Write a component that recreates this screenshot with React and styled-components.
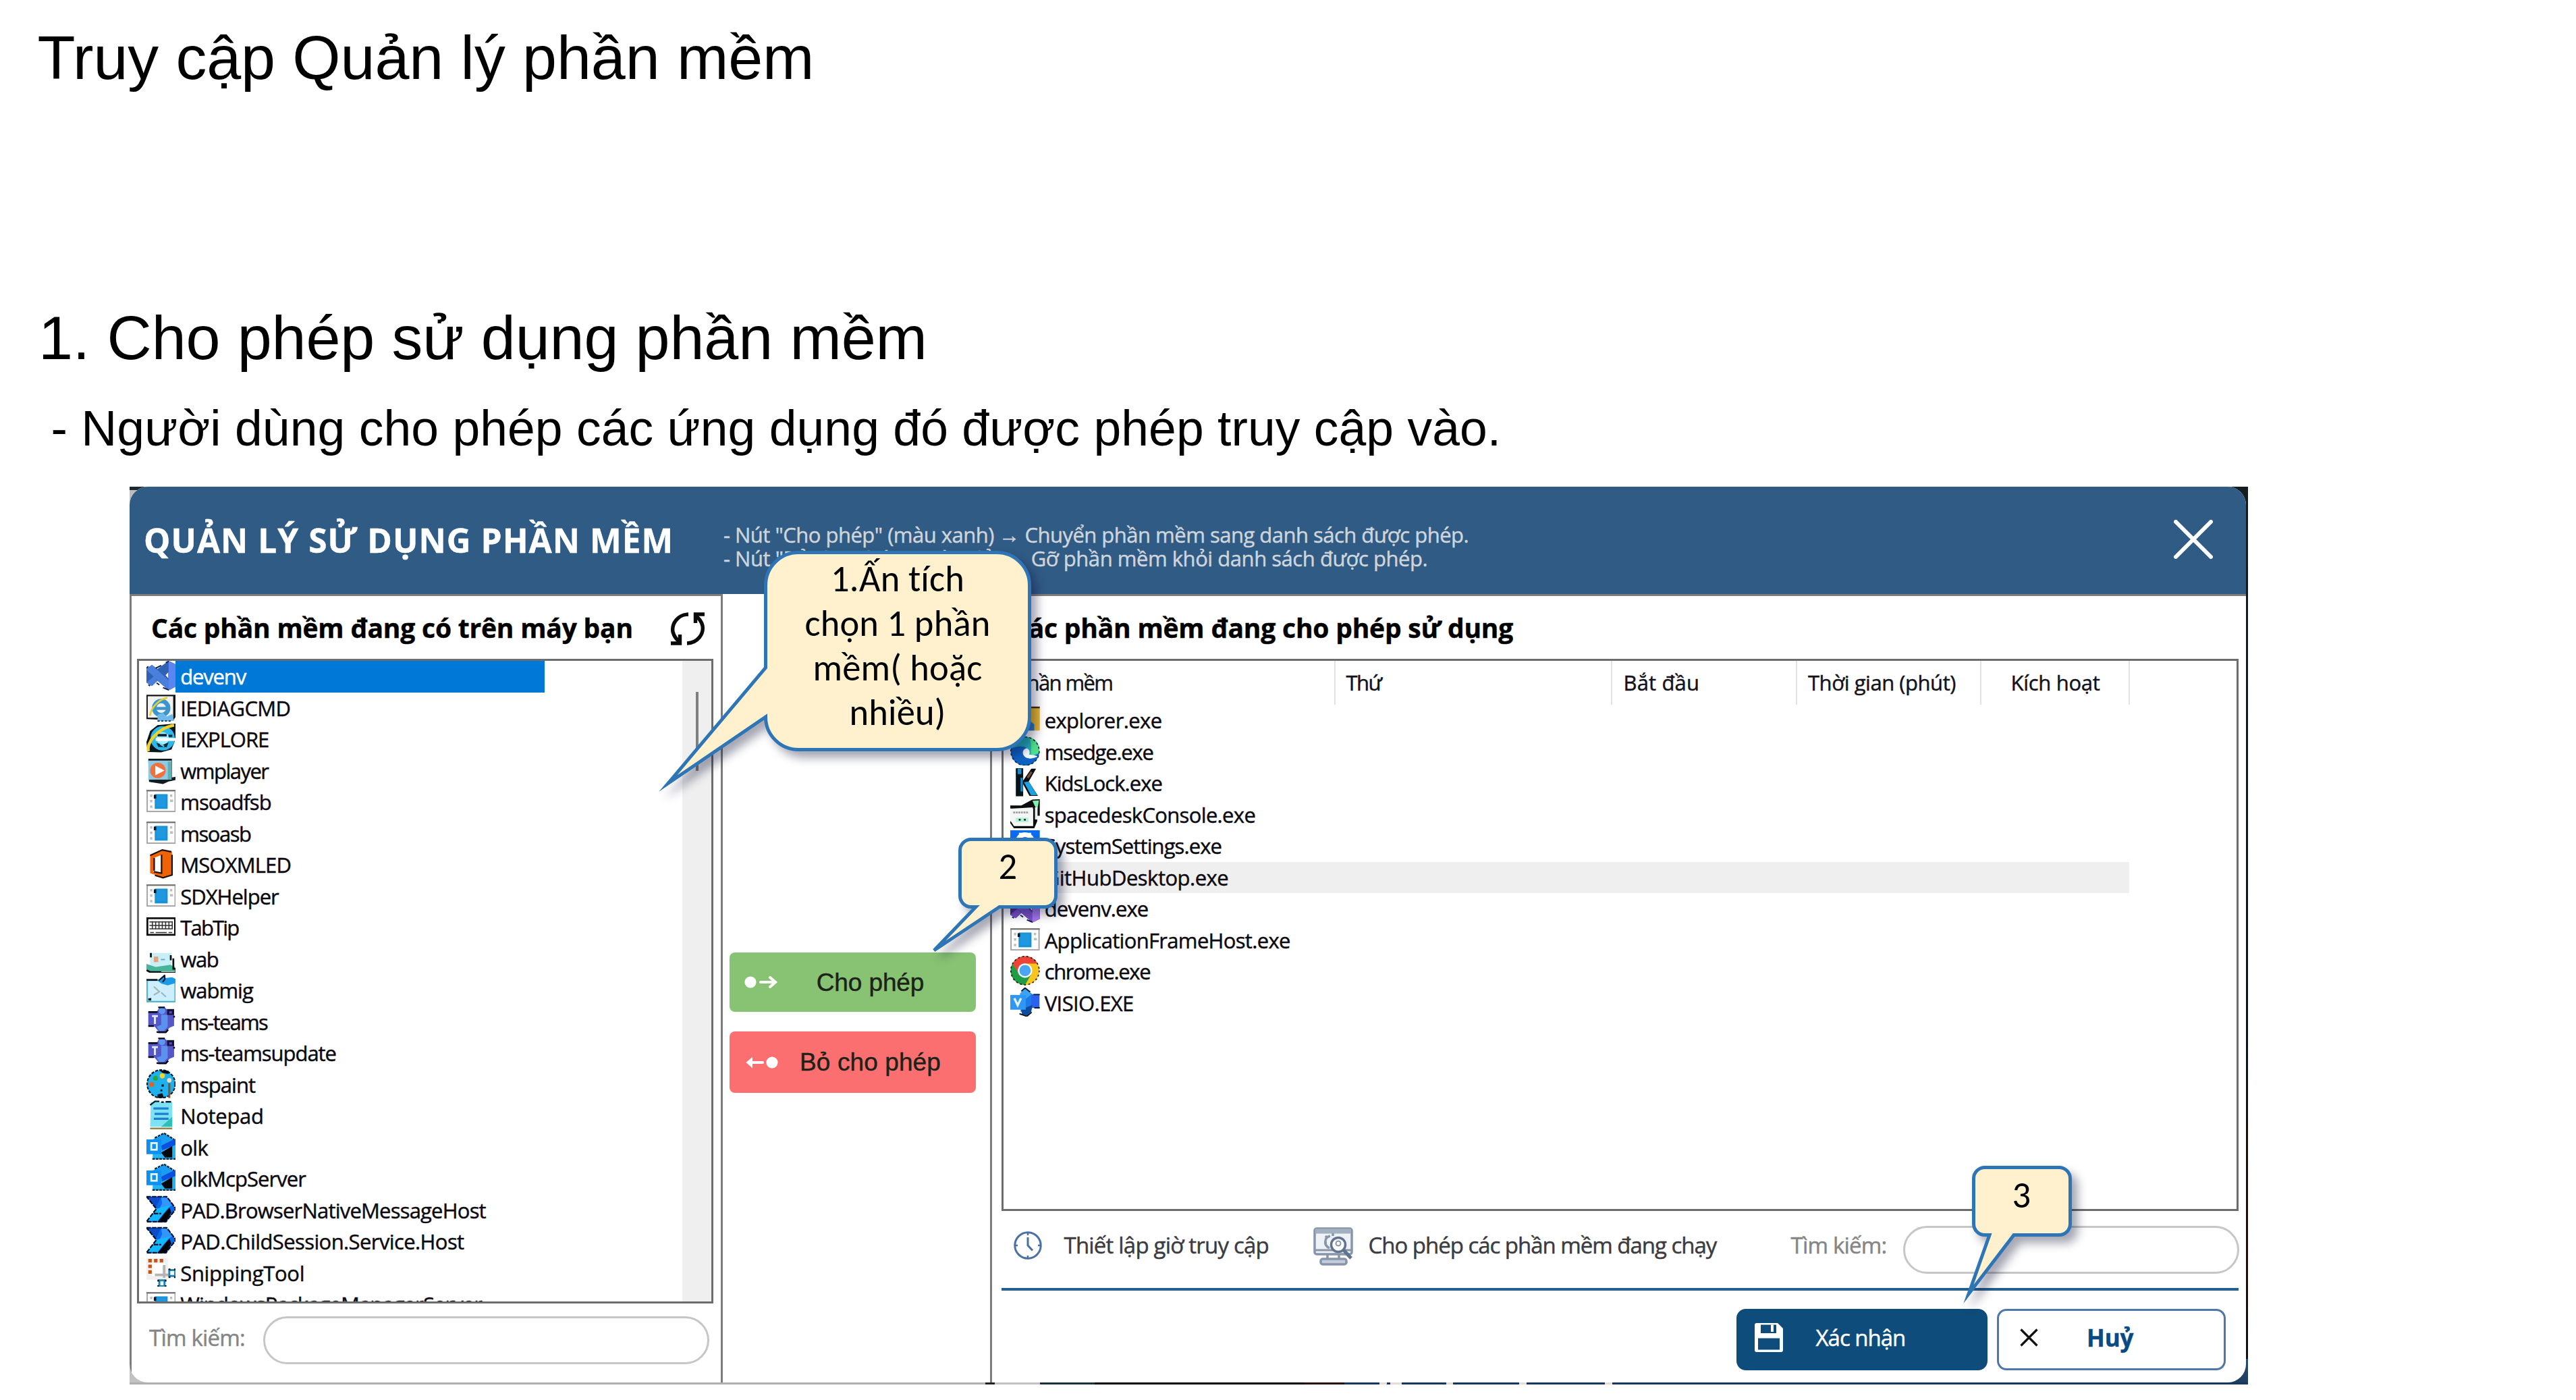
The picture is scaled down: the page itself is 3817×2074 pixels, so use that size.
import React from "react";
import styled, { createGlobalStyle } from "styled-components";

const UI = '"Open Sans", "Noto Sans", sans-serif';

const GlobalStyle = createGlobalStyle`
  * { box-sizing: border-box; }
  body { margin: 0; background: #fff; }
`;

/* ---------- document ---------- */

const Page = styled.main`
  width: 3817px;
  height: 2074px;
  overflow: hidden;
  background: #fff;
  color: #000;
  font-family: "Liberation Sans", Arial, sans-serif;
`;

const Title = styled.h1`
  margin: 32px 0 0 55.5px;
  font-size: 91.7px;
  font-weight: 400;
  line-height: 106px;
  letter-spacing: -0.1px;
`;

const SectionTitle = styled.h2`
  margin: 309px 0 0 57px;
  font-size: 91.7px;
  font-weight: 400;
  line-height: 106px;
  letter-spacing: -0.13px;
`;

const Paragraph = styled.p`
  margin: 40px 0 0 75.5px;
  font-size: 73.3px;
  line-height: 84px;
  letter-spacing: 0.04px;
`;

/* ---------- window ---------- */

const Frame = styled.section`
  position: relative;
  width: 3139px;
  height: 1330px;
  margin: 44px 0 0 192px;
  padding: 0 3px 3px 0;
  font-family: ${UI};
  background:
    linear-gradient(90deg, #b0b0b0 0 1268px, #222 1268px 1282px, #c2c2c2 1282px 1349px,
      #1b3038 1349px 1430px, #000 1430px 1740px, #240a08 1740px 1800px, #17375e 1800px 1852px,
      #e4ded8 1852px 1863px, #17375e 1863px 1868px, #e4ded8 1868px 1885px, #17375e 1885px 1951px,
      #e4ded8 1951px 1961px, #17375e 1961px 2059px, #e4ded8 2059px 2070px, #17375e 2070px 2186px,
      #e4ded8 2186px 2197px, #17375e 2197px 100%) 0 100% / 100% 3px no-repeat,
    linear-gradient(#2a4a70, #1d3d63) 100% 100% / 40px 38px no-repeat,
    linear-gradient(#b4b4b4, #c4c4c4) 0 100% / 40px 60px no-repeat,
    linear-gradient(#1d2930 0 5px, #bdbdbd 5px) 0 0 / 40px 40px no-repeat,
    linear-gradient(#141d20, #0a1418 60%, #200c04 85%, #0a1018);
`;

const AppWindow = styled.div`
  display: flex;
  flex-direction: column;
  width: 3136px;
  height: 1327px;
  overflow: hidden;
  background: #fff;
  border-radius: 27px;
  -webkit-text-stroke-width: 0.45px;
`;

const Header = styled.header`
  display: flex;
  flex: none;
  align-items: flex-start;
  height: 159px;
  padding: 49px 49px 0 21px;
  color: #fff;
  background: #305b85;
`;

const HeaderTitle = styled.div`
  width: 859px;
  font-size: 49.5px;
  font-weight: 700;
  line-height: 60px;
  letter-spacing: 1.05px;
  white-space: nowrap;
`;

const Hints = styled.div`
  flex: 1;
  padding-top: 4.5px;
  color: #ced5db;
  font-size: 31px;
  line-height: 35.5px;
`;

const Hint = styled.div`
  letter-spacing: ${(p) => p.$ls}px;
  white-space: nowrap;
`;

const CloseIcon = styled.svg`
  width: 58px;
  height: 58px;
`;

const Body = styled.div`
  display: flex;
  flex: 1;
`;

const LeftPanel = styled.section`
  display: flex;
  flex-direction: column;
  width: 879px;
  border: solid #7c7c7c;
  border-width: 3px 3px 0 3px;
`;

const RightPanel = styled.section`
  display: flex;
  flex: 1;
  flex-direction: column;
  border: solid #7c7c7c;
  border-width: 3px 0 0 3px;
`;

const PanelHeading = styled.div`
  display: flex;
  flex: none;
  align-items: flex-start;
  justify-content: space-between;
  height: 93px;
  padding: 17px 23px 0 29px;
  font-size: 39px;
  font-weight: 700;
  line-height: 60px;
  letter-spacing: -0.2px;
  white-space: nowrap;
`;

const RefreshIcon = styled.svg`
  width: 52px;
  height: 49px;
  margin-top: 7px;
`;

const ListBox = styled.div`
  display: flex;
  width: 854px;
  height: 955px;
  margin-left: 8px;
  overflow: hidden;
  border: 3px solid #6d6d6d;
`;

const Rows = styled.div`
  flex: 1;
  overflow: hidden;
`;

const Row = styled.div`
  display: flex;
  height: 46.53px;
  padding-left: 10.5px;
  overflow: hidden;
`;

const RowIcon = styled.svg`
  flex: none;
  width: 43.7px;
  height: 43.7px;
`;

const RowLabel = styled.div`
  width: ${(p) => p.$width}px;
  padding-left: 7px;
  font-size: 31px;
  line-height: 47.4px;
  letter-spacing: ${(p) => p.$ls}px;
  white-space: nowrap;
  color: ${(p) => (p.$state === "selected" ? "#fff" : "#0c0a10")};
  background: ${(p) =>
    p.$state === "selected" ? "#0078d7" : p.$state === "hover" ? "#efefef" : "transparent"};
`;

const ScrollTrack = styled.div`
  width: 43px;
  padding: 46px 0 0 20px;
  background: #efefef;
`;

const ScrollThumb = styled.div`
  width: 4px;
  height: 117px;
  background: #808080;
`;

const SearchRow = styled.div`
  display: flex;
  align-items: center;
  padding: 19px 0 0 26px;
`;

const SearchLabel = styled.span`
  width: ${(p) => p.$width}px;
  padding-bottom: ${(p) => p.$lift}px;
  color: #858585;
  font-size: 33px;
  letter-spacing: -0.8px;
  white-space: nowrap;
`;

const Pill = styled.div`
  width: ${(p) => p.$width}px;
  height: 71px;
  background: #fff;
  border: 3px solid #c6c6c6;
  border-radius: 36px;
`;

const Middle = styled.div`
  display: flex;
  flex-direction: column;
  gap: 29px;
  width: 396px;
  padding: 531px 0 0 9.5px;
`;

const MoveButton = styled.div`
  display: flex;
  align-items: center;
  width: 365px;
  height: ${(p) => p.$height}px;
  padding-left: 20px;
  color: #1c2218;
  background: ${(p) => p.$color};
  border-radius: 8px;
  font-family: "Liberation Sans", Arial, sans-serif;
  font-size: 37px;
  letter-spacing: ${(p) => p.$ls}px;
`;

const MoveIcon = styled.svg`
  width: 54px;
  height: 30px;
`;

const MoveLabel = styled.span`
  flex: 1;
  padding: 1px 21px 0 0;
  text-align: center;
`;

/* ---------- table ---------- */

const Table = styled.div`
  flex: none;
  width: 1833px;
  height: 818px;
  margin-left: 13.5px;
  border: 3px solid #6d6d6d;
`;

const HeadRow = styled.div`
  display: grid;
  grid-template-columns: 492px 410px 274px 273px 220px;
  height: 65px;
`;

const HeadCell = styled.div`
  padding-left: ${(p) => p.$pad}px;
  border-right: 2px solid #e2e2e2;
  color: #14121a;
  font-size: 31px;
  line-height: 64px;
  letter-spacing: ${(p) => p.$ls}px;
  white-space: nowrap;
`;

const Toolbar = styled.div`
  display: grid;
  grid-template-columns: 93px 369px 82px 626px 166px 498px;
  align-items: center;
  height: 114px;
  margin-left: 13.5px;
  padding-bottom: 13px;
`;

const ToolText = styled.span`
  color: #3b3b40;
  font-size: 33px;
  letter-spacing: ${(p) => p.$ls}px;
  white-space: nowrap;
`;

const ClockIcon = styled.svg`
  width: 42px;
  height: 42px;
  margin-left: 18.5px;
`;

const MonitorIcon = styled.svg`
  width: 60px;
  height: 57px;
  margin-top: 3px;
`;

const PillSlot = styled.div`
  padding-top: 14px;
`;

const Divider = styled.hr`
  width: 1833px;
  height: 3.5px;
  margin: 0 0 0 13.5px;
  border: 0;
  background: #24608f;
`;

const Actions = styled.div`
  display: flex;
  gap: 14px;
  justify-content: flex-end;
  padding: 27px 30px 0 0;
`;

const ActionButton = styled.div`
  display: flex;
  align-items: center;
  width: ${(p) => (p.$primary ? 372 : 339)}px;
  height: 91px;
  padding-left: ${(p) => (p.$primary ? 24 : 31)}px;
  color: ${(p) => (p.$primary ? "#fff" : "#0a4a82")};
  background: ${(p) => (p.$primary ? "#0d4c7b" : "#fff")};
  border: 3px solid ${(p) => (p.$primary ? "#0d4c7b" : "#4f76ac")};
  border-radius: 14px;
  font-size: ${(p) => (p.$primary ? 33 : 35)}px;
  font-weight: ${(p) => (p.$primary ? 400 : 700)};
  letter-spacing: ${(p) => (p.$primary ? -1 : -0.1)}px;
`;

const ActionLabel = styled.span`
  padding: 0 0 5px ${(p) => p.$gap}px;
`;

const SaveIcon = styled.svg`
  width: 42px;
  height: 43px;
  margin-bottom: 5px;
`;

const CancelIcon = styled.svg`
  width: 27px;
  height: 27px;
  margin-bottom: 5px;
`;

/* ---------- callouts ---------- */

const CalloutBox = styled.div`
  position: absolute;
  left: ${(p) => p.$x}px;
  top: ${(p) => p.$y}px;
  width: ${(p) => p.$w}px;
  height: ${(p) => p.$h}px;
  padding-top: ${(p) => p.$pad}px;
  color: #000;
  font-family: Carlito, Lato, sans-serif;
  font-size: 54.5px;
  line-height: 66px;
  text-align: center;
  white-space: nowrap;
`;

const CalloutShape = styled.svg`
  position: absolute;
  inset: 0;
  width: 100%;
  height: 100%;
  overflow: visible;
  filter: drop-shadow(9px 10px 7px rgba(10, 10, 50, 0.36));
`;

const CalloutLine = styled.div`
  position: relative;
  letter-spacing: 0.15px;
  font-variant-ligatures: none;
`;

function Callout({ x, y, w, h, pad, path, lines }) {
  return (
    <CalloutBox $x={x} $y={y} $w={w} $h={h} $pad={pad}>
      <CalloutShape viewBox={`0 0 ${w} ${h}`}>
        <path d={path} fill="#fff1ce" stroke="#2e75b6" strokeWidth="5" strokeMiterlimit="9" />
      </CalloutShape>
      {lines.map((line) => (
        <CalloutLine key={line}>{line}</CalloutLine>
      ))}
    </CalloutBox>
  );
}

/* ---------- program icons, drawn on a 16-unit grid ---------- */

const vs = (left, right, dark) => (
  <>
    <path d="M0 4.2 3 2.2 6 4.4 12 0 16 2V14L12 16 6 10.8 3 13.6 0 11.8Z" fill={dark} />
    <path d="M0 4.2 3 2.2 13 11.5 12 16 0 4.9Z" fill={left} />
    <path d="M0 11.8 3 13.6 6 10.8 4 8.4Z" fill={left} />
    <path d="M12 0 16 2V14L12 16Z" fill={right} />
    <path d="M11.8 6.2V9.4L10.4 7.8Z" fill="#fff" />
    <path d="M5 4 8 2.5M10.5 1 12 .3M5.5 12 7 13M9 14.5 12 15.8M0 4 1 3M1 13 2 13.5" stroke="#0c1c50" strokeWidth=".7" />
  </>
);

const teams = (
  <>
    <path d="M1 3H5.5L7 .6H10L11 1.5H15V10.5L12.5 11.5 10.5 14H7L4.5 11 1 10.6Z" fill="#5557c8" />
    <circle cx="8.4" cy="2.4" r="1.8" fill="#5f97f0" />
    <path d="M8 4.5H11.5V11L9.5 13.2H7L5.5 11 8 10Z" fill="#5a92ee" />
    <path d="M11.2 1.4H15V4.6H11.2Z" fill="#16123c" />
    <path d="M12.4 2.6H13.8V3.8H12.4Z" fill="#5b4ad0" />
    <path d="M1 3H6M5.5 13.8 7 14H10.5L11.8 12.6M6.4.5H10M15 5V6M1 10.6H4" stroke="#060414" strokeWidth=".9" fill="none" />
    <path d="M3 5.2H6.2M4.6 5.2V9.5" stroke="#dfe6fb" strokeWidth="1.1" />
  </>
);

const generic = (
  <>
    <rect x=".4" y="2.3" width="15.2" height="11.3" fill="#fdfdfd" stroke="#a2a2a2" strokeWidth=".7" />
    <path d="M0 2.3H16" stroke="#707070" strokeWidth=".7" />
    <rect x="4.5" y="4.2" width="7" height="8" fill="#1a92d8" />
    <rect x="5.4" y="5" width="5" height="6" fill="#2098e0" />
    <rect x="4" y="4.6" width="1.3" height="2" fill="#061420" />
    <path d="M2 5H3.2M2 8H3.2M2 11H3.2M12.8 5H14M12.8 7.8H14.4" stroke="#bdbdbd" strokeWidth="1.3" />
  </>
);

const outlook = (
  <>
    <path d="M3.4 4 9.5.8 15.8 5V14.7H3.4Z" fill="#25b4f2" />
    <path d="M4 4 9.5.8 15.8 4.6 9.5 8Z" fill="#1a9cf0" />
    <path d="M8 7.4 15.8 3.6V7L8.4 10Z" fill="#0a50e0" />
    <path d="M8 11.2 14 7.6V13.8H10Z" fill="#04080c" />
    <path d="M0 4H8V12H0Z" fill="#0f8ff0" />
    <rect x="2.6" y="6" width="3" height="3.6" fill="none" stroke="#eaf5ff" strokeWidth="1" />
    <path d="M3.2 14.6H16M4.5 3.2 9.5.6 15 4" stroke="#04243c" strokeWidth=".8" fill="none" strokeDasharray="1.4 .5" />
  </>
);

const automate = (
  <>
    <path d="M0 1H11L16 7.6 10.6 14.8H0L5.4 7.6Z" fill="#0a68f0" />
    <path d="M0 1H8L5 7Z" fill="#0d4cc8" />
    <path d="M8 1.6 11 1.6 14 5.6 5 12 8.5 4.6Z" fill="#3396ff" />
    <path d="M0 14.4 5.4 7.6 13 5.6 6 14.4Z" fill="#12b9ff" />
    <path d="M6 14.8 9.6 10.2 12.6 7 13.4 9.6 10.6 14.8Z" fill="#020406" />
    <path d="M0 1H11L16 7.6 10.6 14.6H0L5.4 7.6ZM4 10.2H8" fill="none" stroke="#03102c" strokeWidth=".8" strokeDasharray="2.4 .6" />
  </>
);

const ICONS = {
  vsBlue: vs("#4a80dc", "#5b86f2", "#2f62b4"),
  vsPurple: vs("#7a50c8", "#a376ee", "#4a2c90"),
  iediag: (
    <>
      <path d="M0 1.2H16V13L14.6 15 0 14.4Z" fill="#141414" />
      <rect x=".7" y="2" width="13.8" height="11.6" fill="#f2f2f2" />
      <circle cx="8" cy="8.4" r="3.8" fill="none" stroke="#3b96cf" strokeWidth="2.4" />
      <path d="M5 8.6H12" stroke="#3b96cf" strokeWidth="1.6" />
      <path d="M2 12.6C2.4 8 7 3.6 11.4 2.8" stroke="#e2cf3c" strokeWidth="1" fill="none" />
      <path d="M6 12 9 11 11 13 14 11.6 15 15.4H6Z" fill="#6fb9ea" />
      <path d="M6 15.5H14" stroke="#0b3350" strokeWidth=".7" strokeDasharray="1.2 .8" />
    </>
  ),
  iexplore: (
    <>
      <path d="M.6 15.4 0 10 2 4 6 .8 15.8 0 16 8 13.6 14 8 15.6Z" fill="#04141a" />
      <circle cx="8.8" cy="8" r="5" fill="#a8ecff" stroke="#2cb8ea" strokeWidth="3.2" />
      <path d="M5 8.6H15.8" stroke="#fff" strokeWidth="1.6" />
      <path d="M6 5.6H11V7H6ZM5.4 10.4 9 11.4 12 10.2 11 12.8 6.4 12.6ZM10.6 3 12.6 4.6M12 6H14V7.2H12Z" fill="#062a3c" />
      <path d="M7.4 11 9.6 12.4" stroke="#5cd6f8" strokeWidth=".8" />
      <path d="M1.2 15C-.4 10.6 6 2.4 15 .9" stroke="#f2d22a" strokeWidth="1.6" fill="none" />
    </>
  ),
  wmplayer: (
    <>
      <path d="M1 1.8H13.8V12L15.8 11.6V13.4L12 14.2 9 15.6 1.4 14.4Z" fill="#121b20" />
      <path d="M1 2.8H13.6V13.2H1Z" fill="#8ccbe2" />
      <path d="M11.6 3.4H13.6V13.2H11.6Z" fill="#5fb0b4" />
      <circle cx="6.2" cy="8.2" r="4.2" fill="#f2703c" />
      <path d="M4.8 5.6 9.8 8.2 4.8 10.8Z" fill="#fff" />
    </>
  ),
  generic,
  office: (
    <>
      <path d="M2 3.4 8.6.4 13.8 1.6V13.8L9 15.4 2 13Z" fill="#ef6206" />
      <path d="M4.4 4.6 8 3.2V13L3.4 12.4 4.4 11.4Z" fill="#fff" />
      <path d="M8.2 3V13L4 12.2M4.2 4.8V11.6M2 3.4 8.6.4 13.6 1.4M13.9 3V14L9 15.5 4.6 14.2" fill="none" stroke="#1c0f04" strokeWidth=".8" />
    </>
  ),
  keyboard: (
    <>
      <rect x=".5" y="3.4" width="15" height="9" fill="#fff" stroke="#0d0d0d" strokeWidth="1" />
      <path d="M1.6 5.4H14.2M1.6 7.3H14.2M1.6 9.2H14.2M2 11.2H4M5 11.2H11M12 11.2H14M3.2 5V9.4M5 5V9.4M6.8 5V9.4M8.6 5V9.4M10.4 5V9.4M12.2 5V9.4M14 5V9.4" stroke="#303030" strokeWidth=".55" />
    </>
  ),
  contacts: (
    <>
      <path d="M2 5H13.6V13H2Z" fill="#c8eff6" />
      <path d="M0 11 5 12.6 13 11.4 15.4 12.6V15H1L0 13.6Z" fill="#48b49a" />
      <path d="M2.4 5V7.4M13.2 6.2V9M14.6 8V13.6H16V15.8H6M0 14.4 2 15.4H8" stroke="#07120f" strokeWidth="1" fill="none" />
      <path d="M4 7H6.4V10H4Z" fill="#e6a07c" />
      <path d="M7.8 8.6H10" stroke="#6ca8c4" strokeWidth=".7" />
    </>
  ),
  migrate: (
    <>
      <rect x=".4" y="3" width="15.2" height="11.6" fill="#cdeefc" stroke="#4ab8c8" strokeWidth=".8" />
      <path d="M0 2.8H6" stroke="#06142c" strokeWidth="1" />
      <path d="M6.4 3.4 10 .2V1.8L14 1.4 16 2.4V4.4L11.6 5.8 8 4.8Z" fill="#189ae8" />
      <path d="M6.6 3.2 9.8.4 10 2.4 8.8 4" fill="none" stroke="#051428" strokeWidth=".8" />
      <path d="M4 6.4 7 9.2 4 11M8 9.6 10.6 12" stroke="#a0b8b4" strokeWidth=".8" fill="none" />
      <path d="M1 14V12.8L2.6 12.6V14Z" fill="#0a1a1e" />
    </>
  ),
  teams,
  paint: (
    <>
      <circle cx="8" cy="8" r="7.6" fill="#1fb1ee" stroke="#061c2a" strokeWidth=".8" strokeDasharray="1.6 .7" />
      <path d="M7 .6 12 .8 12 2.6 8.8 2Z" fill="#05080a" />
      <circle cx="8.6" cy="3.6" r="1.4" fill="#f4d81e" />
      <circle cx="4.9" cy="4.9" r="1.3" fill="#22aa38" />
      <circle cx="2.9" cy="8.3" r="1.3" fill="#e0602a" />
      <circle cx="12.4" cy="6" r="1.2" fill="#f6dcc0" />
      <path d="M12.4 7.6V15.6" stroke="#7c5230" strokeWidth="1.1" />
      <path d="M8.2 8.2H9.4V9.4H8.2ZM7.6 11H8.6V12H7.6ZM6 13.6 8.6 13 9.6 15.6H6Z" fill="#06141e" />
    </>
  ),
  notepad: (
    <>
      <path d="M2.4 1H14V14.4H2Z" fill="#7ce2f4" />
      <path d="M8 14.4 14 9V14.4Z" fill="#2ebfb8" />
      <path d="M3.8 4.4H12M4.4 7.4H12M4 10H12" stroke="#1d80cc" strokeWidth="1.2" />
      <path d="M2 2.6 4.6.6H7M8 1H9.4M10.4.8H13.4" stroke="#06202a" strokeWidth=".9" fill="none" />
      <path d="M2 15.3H14" stroke="#93864c" strokeWidth=".9" />
    </>
  ),
  outlook,
  automate,
  snip: (
    <>
      <path d="M0 .4H11.6V12H0Z" fill="#f0f0f0" />
      <path d="M3 3H10V10H3Z" fill="#fff" />
      <path d="M1 1.7H9.6" stroke="#c65418" strokeWidth="1.9" strokeDasharray="1.9 1.2" />
      <path d="M1.95 3.8V9.6" stroke="#c65418" strokeWidth="1.9" strokeDasharray="1.9 1.2" />
      <path d="M9.6 4V11M4.6 9.4H12" stroke="#b4b4b4" strokeWidth="1.4" />
      <path d="M12.4 6.8H15.6V10H12.4ZM7 12.4H9.8V15.6H7Z" fill="#fff" stroke="#1c86b4" strokeWidth="1.1" />
      <path d="M12 6.4H13M15 6.4H16M12 10.6H13M15 10.6H16M6.4 12V13M10.4 12V13M6.4 15V16M10.4 15V16" stroke="#04161e" strokeWidth=".9" />
    </>
  ),
  folder: (
    <>
      <path d="M0 1.6H16V14H0Z" fill="#eab92e" />
      <path d="M0 1.5H16" stroke="#3b2c08" strokeWidth=".9" />
      <path d="M3 14V10.6L5 9H11L13 10.6V14Z" fill="#2a78c8" />
    </>
  ),
  edge: (
    <>
      <circle cx="8" cy="8" r="7.8" fill="#0f62c4" />
      <path d="M.6 6.4C2 2 5 .2 8.4.2 13 .4 16 4 15.8 8 15.6 9.4 14 10.4 12 10.2L10 9.8C11 8 9.4 5.6 6.4 5.4 4 5.2 2 6 .6 6.4Z" fill="#22b0b8" />
      <path d="M10 .4C14 1 16 4.4 15.8 8 15.4 9.6 13 10.4 11.4 10 11 6 12 4 10 .4Z" fill="#4fe08c" />
      <path d="M9 6.4C6.4 6.8 6 10 8.4 11.4 11 12.6 13.6 11.6 15 10.8L13 10.2 10.2 9.8C10.8 8.6 10.4 7 9 6.4Z" fill="#f2fbff" />
      <circle cx="8" cy="8" r="7.7" fill="none" stroke="#062a40" strokeWidth=".6" strokeDasharray="1.2 1.2" />
    </>
  ),
  kids: (
    <>
      <path d="M3 .4H7V15.6H3Z" fill="#06141c" />
      <path d="M6.4 8 11.4.6H14L10 7.6 15 15.4H10.4Z" fill="#080c10" />
      <path d="M4 .6H6V3.6H4ZM5.6 5.6H6.8V13H5.6Z" fill="#1a8ccc" />
      <path d="M7.4 8 10 7.6 14.6 15H11.2Z" fill="#1aa2e2" />
      <path d="M9.4 5.6 11.6 2.4" stroke="#7a4c30" strokeWidth="1.2" />
    </>
  ),
  spacedesk: (
    <>
      <path d="M0 3.4H6L12 .2 16 0V9H14.6V12L13 15.8H2L0 13V11.4L2 14.6H12.4V5H0Z" fill="#0b0d0c" />
      <path d="M0 5.2 12.2 4.4V12.8L3 14.4 0 11.8Z" fill="#f4f6f5" />
      <path d="M12 .8 15.6.6 14.6 5.8 13.2 3.4Z" fill="#7ff0b4" />
      <path d="M13.4 4.4H14.8V11H13.4Z" fill="#e9efec" />
      <path d="M1.6 7.2H9.8" stroke="#9a9f9c" strokeWidth="1" strokeDasharray="1 .4" />
      <path d="M3 10H9.8V12.4H3Z" fill="#b5f2d4" />
      <path d="M4.6 10.6H5.6V11.6H4.6ZM7.4 10.6H8.4V11.6H7.4Z" fill="#1a3028" />
    </>
  ),
  settings: (
    <>
      <path d="M0 0H16V16H0Z" fill="#0a6cf0" />
      <circle cx="8" cy="6.4" r="4" fill="none" stroke="#fff" strokeWidth="2.6" />
      <path d="M5.500 1.400V4M10.500 1.400V4" stroke="#fff" strokeWidth="1.6" />
    </>
  ),
  github: <circle cx="8" cy="8" r="7.6" fill="#6a3cc0" />,
  chrome: (
    <>
      <circle cx="8" cy="8" r="7.8" fill="#f8c51c" />
      <path d="M8 .2A7.8 7.8 0 0 0 1.2 4.2L4.8 10 8 4.2H14.8A7.8 7.8 0 0 0 8 .2Z" fill="#ec4438" />
      <path d="M1.2 4.2A7.8 7.8 0 0 0 8 15.8L11.4 10 4.8 9.8Z" fill="#1f9c46" />
      <circle cx="8" cy="8" r="3.9" fill="#fff" />
      <circle cx="8" cy="8" r="3.1" fill="#4aa6f4" />
      <circle cx="8" cy="8" r="7.7" fill="none" stroke="#1c1408" strokeWidth=".6" strokeDasharray="1 1.3" />
    </>
  ),
  visio: (
    <>
      <path d="M8 .4 12 3.6H15.8V11H12L9.4 15 5.6 13V4Z" fill="#1f7be4" />
      <path d="M8 .4 11.6 3.6 8 6.4 5 3.6Z" fill="#3ea2f2" />
      <path d="M11.4 4H15.8V11H11.4Z" fill="#2a62f0" />
      <path d="M6 12 12 9.4 11.4 13 9 15.2 6.4 14.6Z" fill="#0d4c9c" />
      <path d="M0 4H8.4V12H0Z" fill="#2f97f4" />
      <path d="M2.2 5.8 4 9.6 5.8 5.8" stroke="#e6f3ff" strokeWidth="1.2" fill="none" />
      <path d="M6 2 8 .2 10.8 2.4M12.6 3.8H16M16 11H13M5 14.2 9 15.6 11.6 13.4" fill="none" stroke="#05152c" strokeWidth=".7" />
    </>
  ),
};

const ProgramIcon = ({ name }) => <RowIcon viewBox="0 0 16 16">{ICONS[name]}</RowIcon>;

/* ---------- data ---------- */

const INSTALLED = [
  { name: "devenv", icon: "vsBlue", ls: -1.16, state: "selected" },
  { name: "IEDIAGCMD", icon: "iediag", ls: -0.65 },
  { name: "IEXPLORE", icon: "iexplore", ls: -1 },
  { name: "wmplayer", icon: "wmplayer", ls: -1.5 },
  { name: "msoadfsb", icon: "generic", ls: -1.01 },
  { name: "msoasb", icon: "generic", ls: -1.47 },
  { name: "MSOXMLED", icon: "office", ls: -0.85 },
  { name: "SDXHelper", icon: "generic", ls: -1 },
  { name: "TabTip", icon: "keyboard", ls: -1.8 },
  { name: "wab", icon: "contacts", ls: -1.3 },
  { name: "wabmig", icon: "migrate", ls: -1 },
  { name: "ms-teams", icon: "teams", ls: -1.7 },
  { name: "ms-teamsupdate", icon: "teams", ls: -1.03 },
  { name: "mspaint", icon: "paint", ls: -0.94 },
  { name: "Notepad", icon: "notepad", ls: -0.31 },
  { name: "olk", icon: "outlook", ls: -0.63 },
  { name: "olkMcpServer", icon: "outlook", ls: -0.95 },
  { name: "PAD.BrowserNativeMessageHost", icon: "automate", ls: -0.8 },
  { name: "PAD.ChildSession.Service.Host", icon: "automate", ls: -0.6 },
  { name: "SnippingTool", icon: "snip", ls: -0.3 },
  { name: "WindowsPackageManagerServer", icon: "generic", ls: -0.9 },
];

const ALLOWED = [
  { name: "explorer.exe", icon: "folder", ls: -0.6 },
  { name: "msedge.exe", icon: "edge", ls: -1.23 },
  { name: "KidsLock.exe", icon: "kids", ls: -0.95 },
  { name: "spacedeskConsole.exe", icon: "spacedesk", ls: -0.66 },
  { name: "SystemSettings.exe", icon: "settings", ls: -0.9 },
  { name: "GitHubDesktop.exe", icon: "github", ls: -0.5, state: "hover" },
  { name: "devenv.exe", icon: "vsPurple", ls: -0.95 },
  { name: "ApplicationFrameHost.exe", icon: "generic", ls: -0.68 },
  { name: "chrome.exe", icon: "chrome", ls: -1.4 },
  { name: "VISIO.EXE", icon: "visio", ls: -0.6 },
];

const COLUMNS = [
  { label: "Phần mềm", pad: 18, ls: -1.6 },
  { label: "Thứ", pad: 16, ls: -1.6 },
  { label: "Bắt đầu", pad: 17, ls: 0.15 },
  { label: "Thời gian (phút)", pad: 16.5, ls: -0.45 },
  { label: "Kích hoạt", pad: 44, ls: -0.29 },
];

const CALLOUTS = [
  {
    x: 940, y: 95, w: 396, h: 298, pad: 9,
    lines: ["1.Ấn tích", "chọn 1 phần", "mềm( hoặc", "nhiều)"],
    path: "M51 2.5H345A48.5 48.5 0 0 1 393.5 51V246A48.5 48.5 0 0 1 345 294.5H51A48.5 48.5 0 0 1 2.5 246L-142 344.5 2.5 173V51A48.5 48.5 0 0 1 51 2.5Z",
  },
  {
    x: 1228, y: 520, w: 147, h: 105, pad: 10,
    lines: ["2"],
    path: "M19 2.5H128A16.5 16.5 0 0 1 144.5 19V86A16.5 16.5 0 0 1 128 102.5H61L-36 167 26 102.5H19A16.5 16.5 0 0 1 2.5 86V19A16.5 16.5 0 0 1 19 2.5Z",
  },
  {
    x: 2729.5, y: 1006, w: 148, h: 105, pad: 10.5,
    lines: ["3"],
    path: "M19 2.5H129A16.5 16.5 0 0 1 145.5 19V86A16.5 16.5 0 0 1 129 102.5H62L-5 190 26 102.5H19A16.5 16.5 0 0 1 2.5 86V19A16.5 16.5 0 0 1 19 2.5Z",
  },
];

function ProgramRow({ item, width }) {
  return (
    <Row>
      <ProgramIcon name={item.icon} />
      <RowLabel $ls={item.ls} $state={item.state} $width={width}>
        {item.name}
      </RowLabel>
    </Row>
  );
}

function InstalledPanel() {
  return (
    <LeftPanel>
      <PanelHeading>
        Các phần mềm đang có trên máy bạn
        <RefreshIcon viewBox="0 0 52 49" fill="none" stroke="#0a0a0a" strokeWidth="5.4">
          <path d="M27 3C11 3.500 2 17 4 29 5.500 35 9 40 14 43.500" />
          <path d="M1 46H14.500V33" />
          <path d="M25 46C41 45.500 50 32 48 20 46.500 14 43 9 38 5.500" />
          <path d="M51 3H37.500V16" />
        </RefreshIcon>
      </PanelHeading>
      <ListBox>
        <Rows>
          {INSTALLED.map((item) => (
            <ProgramRow key={item.name} item={item} width={547} />
          ))}
        </Rows>
        <ScrollTrack>
          <ScrollThumb />
        </ScrollTrack>
      </ListBox>
      <SearchRow>
        <SearchLabel $width={168.5} $lift={9}>
          Tìm kiếm:
        </SearchLabel>
        <Pill $width={661} />
      </SearchRow>
    </LeftPanel>
  );
}

function AllowedPanel() {
  return (
    <RightPanel>
      <PanelHeading>Các phần mềm đang cho phép sử dụng</PanelHeading>
      <Table>
        <HeadRow>
          {COLUMNS.map((column) => (
            <HeadCell key={column.label} $pad={column.pad} $ls={column.ls}>
              {column.label}
            </HeadCell>
          ))}
        </HeadRow>
        {ALLOWED.map((item) => (
          <ProgramRow key={item.name} item={item} width={1614} />
        ))}
      </Table>
      <Toolbar>
        <ClockIcon viewBox="0 0 42 42" fill="none" stroke="#4a71a6" strokeWidth="3">
          <circle cx="21" cy="21" r="19.200" />
          <path d="M21 9V21L28 28.500" />
          <path d="M21 2V6M21 36V40M2 21H6M36 21H40" strokeWidth="2.500" />
        </ClockIcon>
        <ToolText $ls={-0.8}>Thiết lập giờ truy cập</ToolText>
        <MonitorIcon viewBox="0 0 60 57" fill="none" stroke="#8796ab" strokeWidth="3.500">
          <rect x="2" y="2" width="55" height="38" rx="3" fill="#eef1f5" />
          <path d="M3 6H56" strokeWidth="7" stroke="#a3b0c0" />
          <path d="M3 34H56" strokeWidth="3" />
          <path d="M21 41V47M38 41V47" />
          <rect x="11" y="47" width="38" height="8" rx="3" fill="#c3ccd8" />
          <path d="M25 13C16 15 15 27 24 31M29 9V13M18 13 21 16M16 23H20" strokeWidth="3.500" />
          <circle cx="37" cy="26" r="10.500" fill="#fff" stroke="#60738f" strokeWidth="3.500" />
          <path d="M45 34 56 46" stroke="#60738f" strokeWidth="5" />
          <circle cx="37" cy="24" r="3.500" stroke="#8796ab" strokeWidth="2" />
        </MonitorIcon>
        <ToolText $ls={-1.03}>Cho phép các phần mềm đang chạy</ToolText>
        <SearchLabel $width={166} $lift={0}>
          Tìm kiếm:
        </SearchLabel>
        <PillSlot>
          <Pill $width={498} />
        </PillSlot>
      </Toolbar>
      <Divider />
      <Actions>
        <ActionButton $primary>
          <SaveIcon viewBox="0 0 42 43">
            <path d="M3 0H34L42 8V40A3 3 0 0 1 39 43H3A3 3 0 0 1 0 40V3A3 3 0 0 1 3 0Z" fill="#fff" />
            <path d="M9 2.500H32V15H9Z" fill="#0d4c7b" />
            <path d="M24 2.500H28V13H24Z" fill="#fff" />
            <path d="M5 22.500H37V39.500H5Z" fill="#0d4c7b" />
          </SaveIcon>
          <ActionLabel $gap={48.5}>Xác nhận</ActionLabel>
        </ActionButton>
        <ActionButton>
          <CancelIcon viewBox="0 0 27 27" stroke="#111" strokeWidth="3.200">
            <path d="M1.500 1.500 25.500 25.500M25.500 1.500 1.500 25.500" />
          </CancelIcon>
          <ActionLabel $gap={72}>Huỷ</ActionLabel>
        </ActionButton>
      </Actions>
    </RightPanel>
  );
}

export default function App() {
  return (
    <Page>
      <GlobalStyle />
      <Title>Truy cập Quản lý phần mềm</Title>
      <SectionTitle>1. Cho phép sử dụng phần mềm</SectionTitle>
      <Paragraph>- Người dùng cho phép các ứng dụng đó được phép truy cập vào.</Paragraph>
      <Frame>
        <AppWindow>
          <Header>
            <HeaderTitle>QUẢN LÝ SỬ DỤNG PHẦN MỀM</HeaderTitle>
            <Hints>
              <Hint $ls={-0.51}>
                - Nút "Cho phép" (màu xanh) → Chuyển phần mềm sang danh sách được phép.
              </Hint>
              <Hint $ls={-0.46}>
                - Nút "Bỏ cho phép" (màu đỏ) → Gỡ phần mềm khỏi danh sách được phép.
              </Hint>
            </Hints>
            <CloseIcon viewBox="0 0 58 58" stroke="#fff" strokeWidth="6" strokeLinecap="round">
              <path d="M3 3 55 55M55 3 3 55" />
            </CloseIcon>
          </Header>
          <Body>
            <InstalledPanel />
            <Middle>
              <MoveButton $color="#88c374" $height={88} $ls={-0.1}>
                <MoveIcon viewBox="0 0 54 30" fill="none" stroke="#fff" strokeWidth="4" strokeLinecap="round">
                  <circle cx="11" cy="15" r="8.600" fill="#fff" stroke="none" />
                  <path d="M26 15H47M40 8 48 15 40 22" />
                </MoveIcon>
                <MoveLabel>Cho phép</MoveLabel>
              </MoveButton>
              <MoveButton $color="#fb6f71" $height={91} $ls={0.1}>
                <MoveIcon viewBox="0 0 54 30" fill="none" stroke="#fff" strokeWidth="4" strokeLinecap="round">
                  <circle cx="43" cy="15" r="8.600" fill="#fff" stroke="none" />
                  <path d="M8 15H29" />
                  <path d="M13 9 6 15 13 21Z" fill="#fff" strokeWidth="2" />
                </MoveIcon>
                <MoveLabel>Bỏ cho phép</MoveLabel>
              </MoveButton>
            </Middle>
            <AllowedPanel />
          </Body>
        </AppWindow>
        {CALLOUTS.map((callout) => (
          <Callout key={callout.x} {...callout} />
        ))}
      </Frame>
    </Page>
  );
}
